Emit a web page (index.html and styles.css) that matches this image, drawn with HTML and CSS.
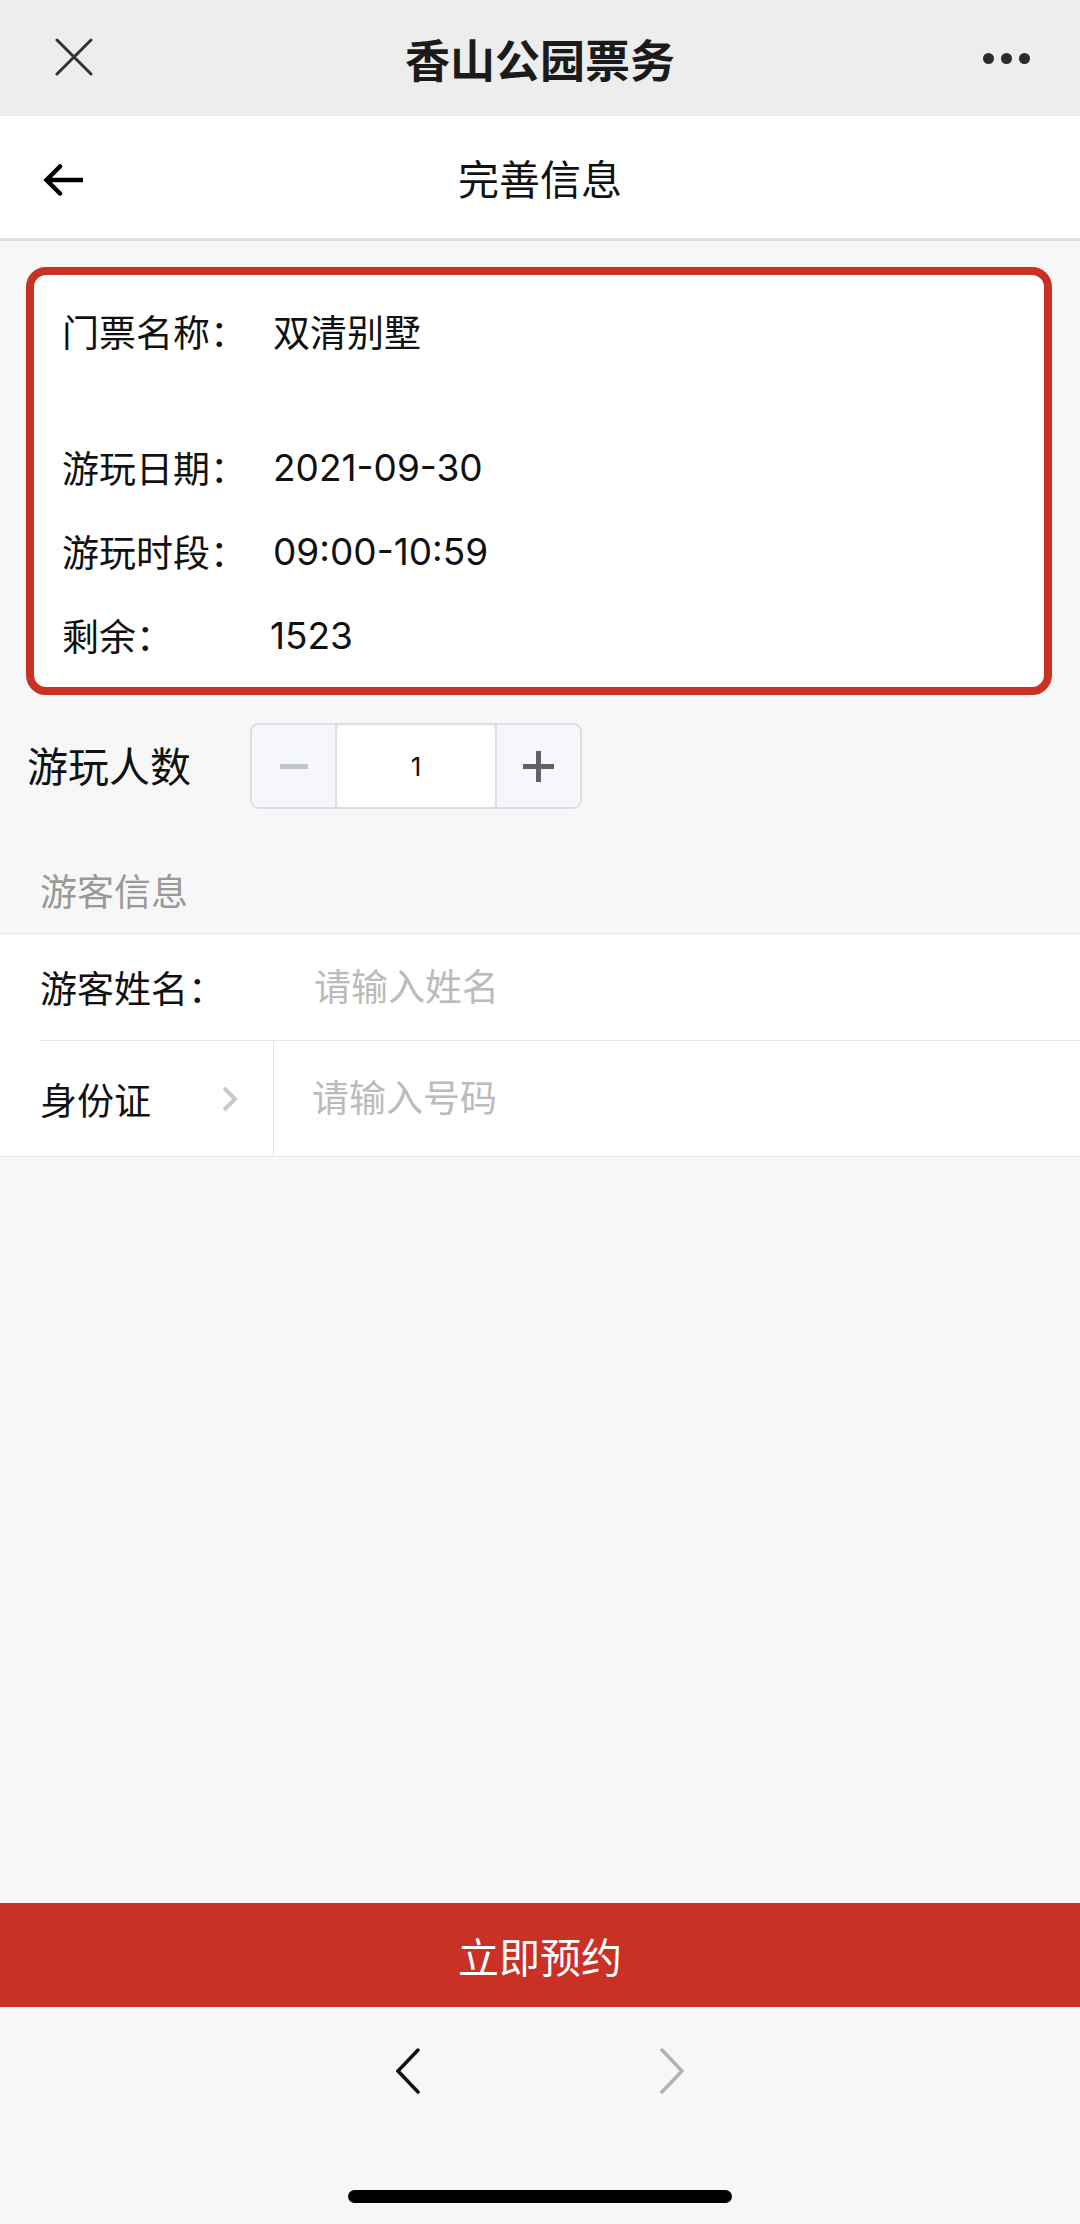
FILE: index.html
```html
<!DOCTYPE html>
<html lang="zh-CN">
<head>
  <meta charset="UTF-8">
  <title>香山公园票务</title>
  <link rel="stylesheet" href="styles.css">
</head>
<body>
<div class="page">

  <!-- 웹뷰 상단 바 -->
  <header class="app-bar">
    <span class="app-bar-close">
      <svg width="38" height="38" viewBox="0 0 38 38"><path d="M2 2 L36 36 M36 2 L2 36" stroke="#333" stroke-width="3" stroke-linecap="round" fill="none"/></svg>
    </span>
    <h1 class="app-bar-title">香山公园票务</h1>
    <span class="app-bar-more"><i></i><i></i><i></i></span>
  </header>

  <nav class="nav-bar">
    <span class="nav-back">
      <svg width="40" height="32" viewBox="0 0 40 32"><path d="M39 16 H4 M17 2.5 L3.5 16 L17 29.5" stroke="#000" stroke-width="4.5" stroke-linecap="round" fill="none"/></svg>
    </span>
    <h2 class="nav-title">完善信息</h2>
    <span></span>
  </nav>

  <main class="content">

    <section class="ticket-card">
      <div class="ticket-row is-name">
        <span class="ticket-label">门票名称：</span>
        <span class="ticket-value">双清别墅</span>
      </div>
      <div class="ticket-row">
        <span class="ticket-label">游玩日期：</span>
        <span class="ticket-value">2021-09-30</span>
      </div>
      <div class="ticket-row">
        <span class="ticket-label">游玩时段：</span>
        <span class="ticket-value">09:00-10:59</span>
      </div>
      <div class="ticket-row">
        <span class="ticket-label is-short">剩余：</span>
        <span class="ticket-value">1523</span>
      </div>
    </section>

    <div class="count-row">
      <span class="count-label">游玩人数</span>
      <div class="stepper">
        <button type="button" class="stepper-btn is-minus" disabled><i></i></button>
        <input class="stepper-input" type="text" value="1">
        <button type="button" class="stepper-btn is-plus"><i></i></button>
      </div>
    </div>

    <p class="group-title">游客信息</p>

    <div class="cell-group">
      <div class="cell is-name">
        <label class="cell-label" for="visitor-name">游客姓名：</label>
        <input id="visitor-name" class="cell-input" type="text" placeholder="请输入姓名">
      </div>
      <div class="cell is-id">
        <span class="cell-label">
          身份证
          <svg width="20" height="28" viewBox="0 0 20 28"><path d="M4 3 L15 14 L4 25" stroke="#c8c9cc" stroke-width="4" fill="none"/></svg>
        </span>
        <input class="cell-input" type="text" placeholder="请输入号码">
      </div>
    </div>

  </main>

  <button type="button" class="submit">立即预约</button>

  <footer class="browser-bar">
    <div class="browser-arrows">
      <svg width="24" height="46" viewBox="0 0 24 46"><path d="M22 2 L2 23 L22 44" stroke="#111" stroke-width="3.5" stroke-linecap="round" fill="none"/></svg>
      <svg width="24" height="46" viewBox="0 0 24 46"><path d="M2 2 L22 23 L2 44" stroke="#b3b3b3" stroke-width="3.5" stroke-linecap="round" fill="none"/></svg>
    </div>
    <span class="home-indicator"></span>
  </footer>

</div>
</body>
</html>
```

FILE: styles.css
```css
html, body {
  height: 100%;
}
body {
  margin: 0;
  background: #f7f7f7;
  font-family: Inter, "Noto Sans CJK SC", sans-serif;
  color: #111;
}
.page {
  display: flex;
  flex-direction: column;
  min-height: 100vh;
}

/* 상단 바 */
.app-bar {
  display: grid;
  grid-template-columns: 1fr auto 1fr;
  align-items: center;
  height: 116px;
  background: #ededed;
}
.app-bar-close {
  display: flex;
  padding-left: 55px;
  margin-top: -2px;
}
.app-bar-title {
  margin: 0;
  font-size: 45px;
  font-weight: 600;
  color: #1b1b1b;
}
.app-bar-more {
  display: flex;
  justify-content: flex-end;
  gap: 7px;
  padding-right: 50px;
}
.app-bar-more i {
  width: 11px;
  height: 11px;
  border-radius: 50%;
  background: #2b2b2b;
}

.nav-bar {
  display: grid;
  grid-template-columns: 1fr auto 1fr;
  align-items: center;
  height: 122px;
  background: #fff;
  border-bottom: 3px solid #e0e0e0;
}
.nav-back {
  display: flex;
  padding-left: 43px;
  margin-top: 6px;
}
.nav-title {
  margin: 0;
  font-size: 41px;
  font-weight: 400;
}

/* 본문 */
.content {
  flex: 1;
}
.ticket-card {
  margin: 26px 28px 0 26px;
  padding: 14px 28px 10px;
  border: 8px solid #c93125;
  border-radius: 20px;
  background: #fff;
}
.ticket-row {
  display: flex;
  align-items: center;
  height: 84px;
  font-size: 37px;
}
.ticket-row.is-name {
  margin-bottom: 52px;
}
.ticket-label {
  width: 211px;
  flex: none;
}
.ticket-label.is-short {
  width: 208px;
}

.count-row {
  display: flex;
  align-items: center;
  margin-top: 28px;
  padding-left: 27px;
}
.count-label {
  width: 223px;
  font-size: 41px;
  margin-top: -4px;
}
.stepper {
  display: flex;
  height: 86px;
  border: 2px solid #dcdfe6;
  border-radius: 9px;
  overflow: hidden;
  box-sizing: border-box;
}
.stepper-btn {
  display: flex;
  justify-content: center;
  align-items: center;
  width: 85px;
  padding: 0;
  border: 0;
  background: #f5f7fa;
}
.stepper-btn.is-minus {
  border-right: 2px solid #dcdfe6;
}
.stepper-btn.is-plus {
  border-left: 2px solid #dcdfe6;
}
.stepper-btn i {
  position: relative;
  display: block;
  width: 28px;
  height: 5px;
  background: #c0c4cc;
}
.stepper-btn.is-plus i {
  width: 31px;
  background: #606266;
}
.stepper-btn.is-plus i::after {
  content: "";
  position: absolute;
  left: 13px;
  top: -13px;
  width: 5px;
  height: 31px;
  background: #606266;
}
.stepper-input {
  width: 158px;
  padding: 0;
  border: 0;
  border-radius: 6px;
  background: #fff;
  text-align: center;
  font-family: Inter, sans-serif;
  font-size: 26px;
  color: #111;
  outline: none;
}

.group-title {
  margin: 0;
  padding: 60px 0 16px 40px;
  line-height: 48px;
  font-size: 37px;
  color: #999;
}

.cell-group {
  padding-left: 40px;
  background: #fff;
  border-top: 1px solid #e6e6e6;
  border-bottom: 1px solid #e6e6e6;
}
.cell {
  display: flex;
  align-items: stretch;
  height: 106px;
}
.cell + .cell {
  height: 115px;
  border-top: 1px solid #e6e6e6;
}
.cell-label {
  display: flex;
  justify-content: space-between;
  align-items: center;
  width: 234px;
  font-size: 37px;
  color: #111;
}
.cell.is-id .cell-label {
  padding-right: 33px;
  border-right: 1px solid #e6e6e6;
  box-sizing: border-box;
}
.cell-input {
  flex: 1;
  padding: 0 0 0 40px;
  border: 0;
  background: transparent;
  font-family: Inter, "Noto Sans CJK SC", sans-serif;
  font-size: 37px;
  outline: none;
}
.cell.is-id .cell-input {
  padding-left: 38px;
}
.cell-input::placeholder {
  color: #bbb;
}

/* 하단 */
.submit {
  height: 104px;
  border: 0;
  background: #c93125;
  color: #fff;
  font-family: "Noto Sans CJK SC", sans-serif;
  font-size: 41px;
}
.browser-bar {
  display: flex;
  flex-direction: column;
  align-items: center;
  height: 217px;
}
.browser-arrows {
  display: flex;
  align-items: center;
  gap: 240px;
  height: 128px;
}
.home-indicator {
  margin-top: 55px;
  width: 384px;
  height: 13px;
  border-radius: 7px;
  background: #000;
}
```
